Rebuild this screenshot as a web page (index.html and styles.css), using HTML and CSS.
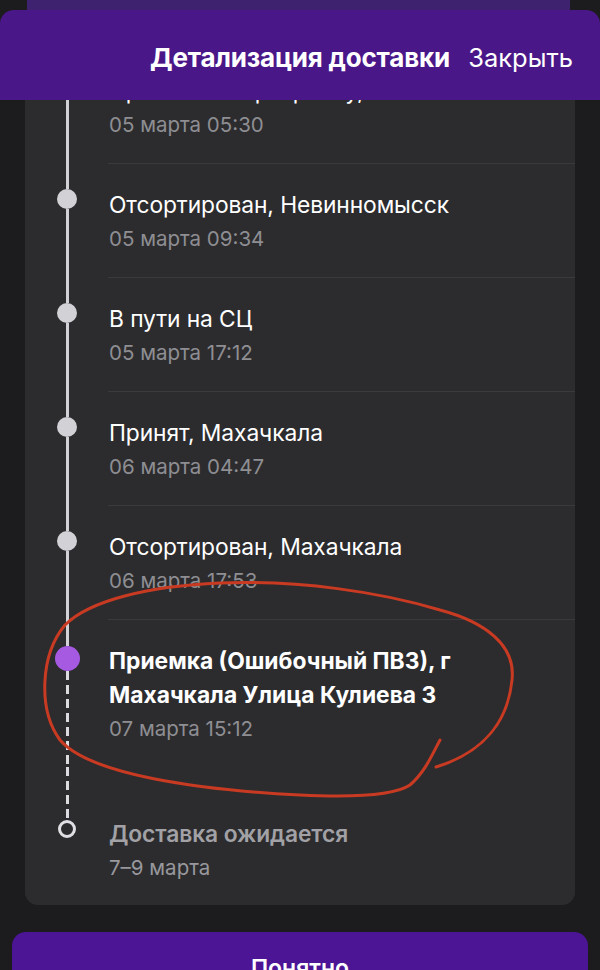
FILE: index.html
```html
<!DOCTYPE html>
<html lang="ru">
<head>
<meta charset="utf-8">
<title>Детализация доставки</title>
<link rel="stylesheet" href="styles.css">
</head>
<body>
<div class="screen">
  <div class="sheet-back"></div>
  <header class="header">
    <span class="spacer"></span>
    <h1 class="title">Детализация доставки</h1>
    <button class="close" type="button">Закрыть</button>
  </header>

  <main class="content">
    <section class="card">
      <ol class="timeline">
        <li class="event first">
          <div class="rail"><span class="seg"></span><span class="dot"></span><span class="seg fill"></span></div>
          <div class="body"><p class="name">Принят на сортировку, Невинномысск</p><p class="date">05 марта 05:30</p></div>
        </li>
        <li class="event">
          <div class="rail"><span class="seg"></span><span class="dot"></span><span class="seg fill"></span></div>
          <div class="body"><p class="name">Отсортирован, Невинномысск</p><p class="date">05 марта 09:34</p></div>
        </li>
        <li class="event">
          <div class="rail"><span class="seg"></span><span class="dot"></span><span class="seg fill"></span></div>
          <div class="body"><p class="name">В пути на СЦ</p><p class="date">05 марта 17:12</p></div>
        </li>
        <li class="event">
          <div class="rail"><span class="seg"></span><span class="dot"></span><span class="seg fill"></span></div>
          <div class="body"><p class="name">Принят, Махачкала</p><p class="date">06 марта 04:47</p></div>
        </li>
        <li class="event">
          <div class="rail"><span class="seg"></span><span class="dot"></span><span class="seg fill"></span></div>
          <div class="body"><p class="name">Отсортирован, Махачкала</p><p class="date">06 марта 17:53</p></div>
        </li>
        <li class="event current">
          <div class="rail"><span class="seg"></span><span class="dot"></span><span class="seg fill dashed"></span></div>
          <div class="body"><p class="name">Приемка (Ошибочный ПВЗ), г Махачкала Улица Кулиева 3</p><p class="date">07 марта 15:12</p></div>
        </li>
        <li class="event pending">
          <div class="rail"><span class="seg dashed"></span><span class="dot"></span></div>
          <div class="body"><p class="name">Доставка ожидается</p><p class="date">7–9 марта</p></div>
        </li>
      </ol>
    </section>
    <button class="ok" type="button">Понятно</button>
  </main>

  <svg class="annotation" width="600" height="970" viewBox="0 0 600 970" aria-hidden="true">
    <path d="M436 767 C485 752 508 720 512 680 C516 645 485 622 440 610 C380 592 300 580 220 583 C150 586 90 600 65 625 C40 655 38 710 60 740 C90 775 200 790 300 795 C360 798 395 795 410 785 C425 772 432 755 440 740" fill="none" stroke="#c93a22" stroke-width="3" stroke-linecap="round"/>
  </svg>
</div>
</body>
</html>
```

FILE: styles.css
```css
* { box-sizing: border-box; }

html, body {
  margin: 0;
  padding: 0;
  background: #1c1c1e;
}

body {
  font-family: Inter, "Noto Sans", "DejaVu Sans", sans-serif;
  color: #ffffff;
  -webkit-font-smoothing: antialiased;
}

.screen {
  position: relative;
  width: 600px;
  height: 970px;
  overflow: hidden;
  background: #1c1c1e;
}

.sheet-back {
  position: absolute;
  top: -30px;
  left: 27px;
  right: 30px;
  height: 60px;
  border-radius: 14px;
  background: #3e2270;
  z-index: 2;
}

.header {
  position: absolute;
  top: 10px;
  left: 0;
  right: 0;
  height: 90px;
  padding-top: 4px;
  display: grid;
  grid-template-columns: 1fr auto 1fr;
  align-items: center;
  background: #4a1789;
  border-radius: 14px 14px 0 0;
  z-index: 3;
}

.title {
  margin: 0;
  font-size: 26px;
  font-weight: 700;
  letter-spacing: -0.2px;
  color: #ffffff;
}

.close {
  justify-self: end;
  margin-right: 27px;
  padding: 0;
  border: 0;
  background: none;
  font: inherit;
  font-size: 25.5px;
  color: #ffffff;
}

.content {
  padding-top: 49px;
}

.card {
  margin: 0 25px;
  background: #2c2c2e;
  border-radius: 13px;
  overflow: hidden;
}

.timeline {
  list-style: none;
  margin: 0;
  padding: 0;
}

.event {
  display: grid;
  grid-template-columns: 83px 1fr;
}

.rail {
  display: flex;
  flex-direction: column;
  align-items: center;
  padding-left: 1px;
}

.seg {
  width: 3px;
  height: 26px;
  flex: none;
  background: #d1d1d6;
}

.seg.fill {
  flex: 1 1 auto;
  height: auto;
}

.seg.dashed {
  background: repeating-linear-gradient(to bottom, #dcdce0 0 9px, transparent 9px 14px);
}

.dot {
  width: 20px;
  height: 20px;
  flex: none;
  border-radius: 50%;
  background: #d1d1d6;
}

.body {
  padding: 24px 20px 21px 1px;
  border-top: 1px solid #3a3a3c;
}

.first .body { border-top: 0; padding-top: 25px; }

.name {
  margin: 0;
  font-size: 22.8px;
  line-height: 34px;
  letter-spacing: -0.1px;
  color: #ffffff;
}

.date {
  margin: 0;
  font-size: 20.5px;
  line-height: 34px;
  color: #8e8e93;
}

.current .seg:first-child { height: 27px; }

.current .dot {
  width: 25px;
  height: 25px;
  background: #a65ae2;
}

.current .name {
  font-weight: 700;
  letter-spacing: 0;
}

.pending .body {
  border-top: 0;
  padding-top: 50px;
  padding-bottom: 20px;
}

.pending .seg.dashed {
  height: 53px;
}

.pending .dot {
  width: 18px;
  height: 18px;
  background: transparent;
  border: 3px solid #e0e0e4;
}

.pending .name {
  font-weight: 600;
  color: #a1a1a6;
}

.pending .date {
  color: #98989d;
}

.ok {
  display: block;
  width: calc(100% - 24px);
  height: 72px;
  margin: 27px 12px 0;
  padding: 0;
  border: 0;
  border-radius: 14px;
  background: #4c1595;
  font: inherit;
  font-size: 23px;
  font-weight: 600;
  color: #ffffff;
}

.annotation {
  position: absolute;
  top: 0;
  left: 0;
  z-index: 1;
  pointer-events: none;
}
```
